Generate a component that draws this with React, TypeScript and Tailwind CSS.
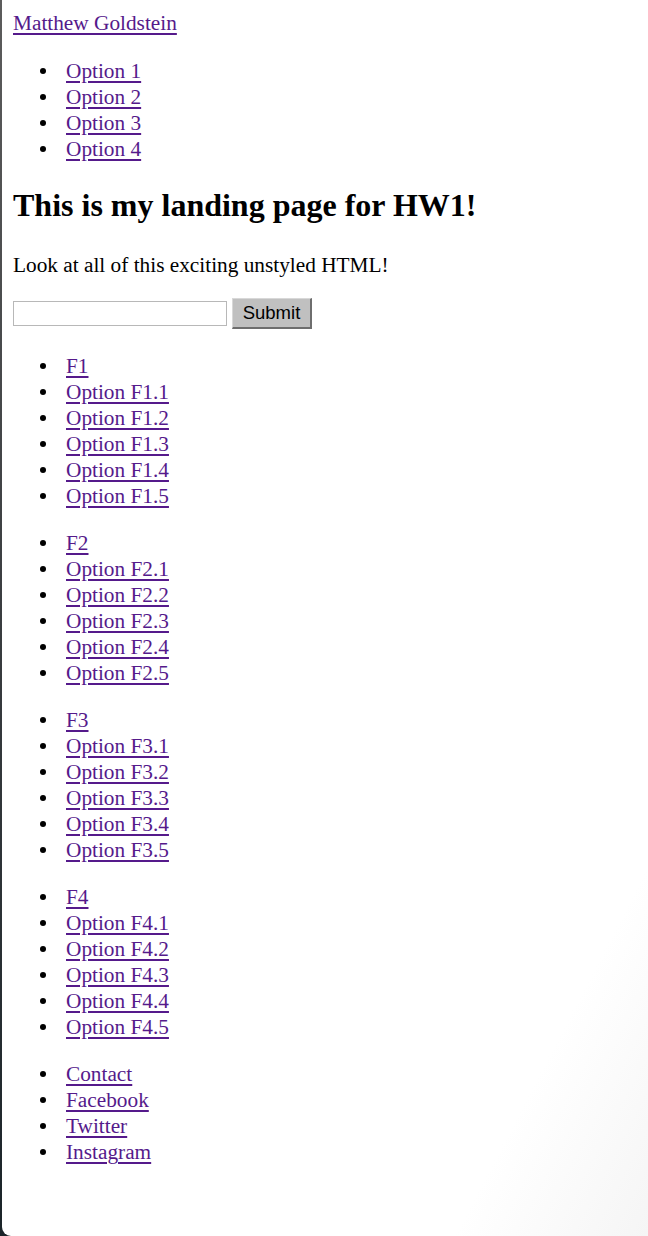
const serif = { fontFamily: '"Liberation Serif", "Times New Roman", serif' };

const topLinks = ["Option 1", "Option 2", "Option 3", "Option 4"];

const groups = [1, 2, 3, 4].map((n) => [
  `F${n}`,
  ...[1, 2, 3, 4, 5].map((i) => `Option F${n}.${i}`),
]);

const social = ["Contact", "Facebook", "Twitter", "Instagram"];

function LinkList({ items, className }: { items: string[]; className?: string }) {
  return (
    <ul className={className}>
      {items.map((label) => (
        <li key={label} className="flex items-center h-[26px]">
          <span className="ml-[27px] w-[6px] h-[6px] rounded-full bg-black shrink-0" />
          <a
            href="#"
            className="ml-[20px] text-[#551a8b] underline decoration-[1.5px] underline-offset-[3px] leading-[26px]"
          >
            {label}
          </a>
        </li>
      ))}
    </ul>
  );
}

export default function App() {
  return (
    <div className="h-[1236px] w-full bg-gradient-to-b from-[#5c5c5c] via-[#3a3d40] to-[#1b2429] overflow-hidden">
      <div
        className="ml-[2px] h-full bg-gradient-to-br from-white from-85% to-[#f5f5f5] rounded-bl-[9px] pl-[11px] pt-[10px] text-black text-[21.3px]"
        style={serif}
      >
        <a
          href="#"
          className="block w-fit text-[#551a8b] underline decoration-[1.5px] underline-offset-[3px] leading-[26px]"
        >
          Matthew Goldstein
        </a>

        <LinkList items={topLinks} className="mt-[22px]" />

        <h1 className="mt-[24px] text-[32px] font-bold leading-[38px]">
          This is my landing page for HW1!
        </h1>

        <p className="mt-[28px] leading-[26px]">Look at all of this exciting unstyled HTML!</p>

        <form className="mt-[20px] flex items-center h-[31px]" onSubmit={(e) => e.preventDefault()}>
          <input
            type="text"
            className="w-[214px] h-[25px] border border-[#b8b8b8] bg-white outline-none"
          />
          <button
            type="submit"
            className="ml-[5px] w-[80px] h-[31px] bg-[#c0c0c0] border border-t-[#d8d8d8] border-l-[#d8d8d8] border-r-[#6e6e6e] border-b-[#6e6e6e] border-r-2 border-b-2 text-[18.5px] leading-none text-black"
            style={{ fontFamily: '"Liberation Sans", Arial, sans-serif' }}
          >
            Submit
          </button>
        </form>

        <div className="mt-[24px] flex flex-col gap-[21px]">
          {groups.map((g) => (
            <LinkList key={g[0]} items={g} />
          ))}
          <LinkList items={social} />
        </div>
      </div>
    </div>
  );
}
